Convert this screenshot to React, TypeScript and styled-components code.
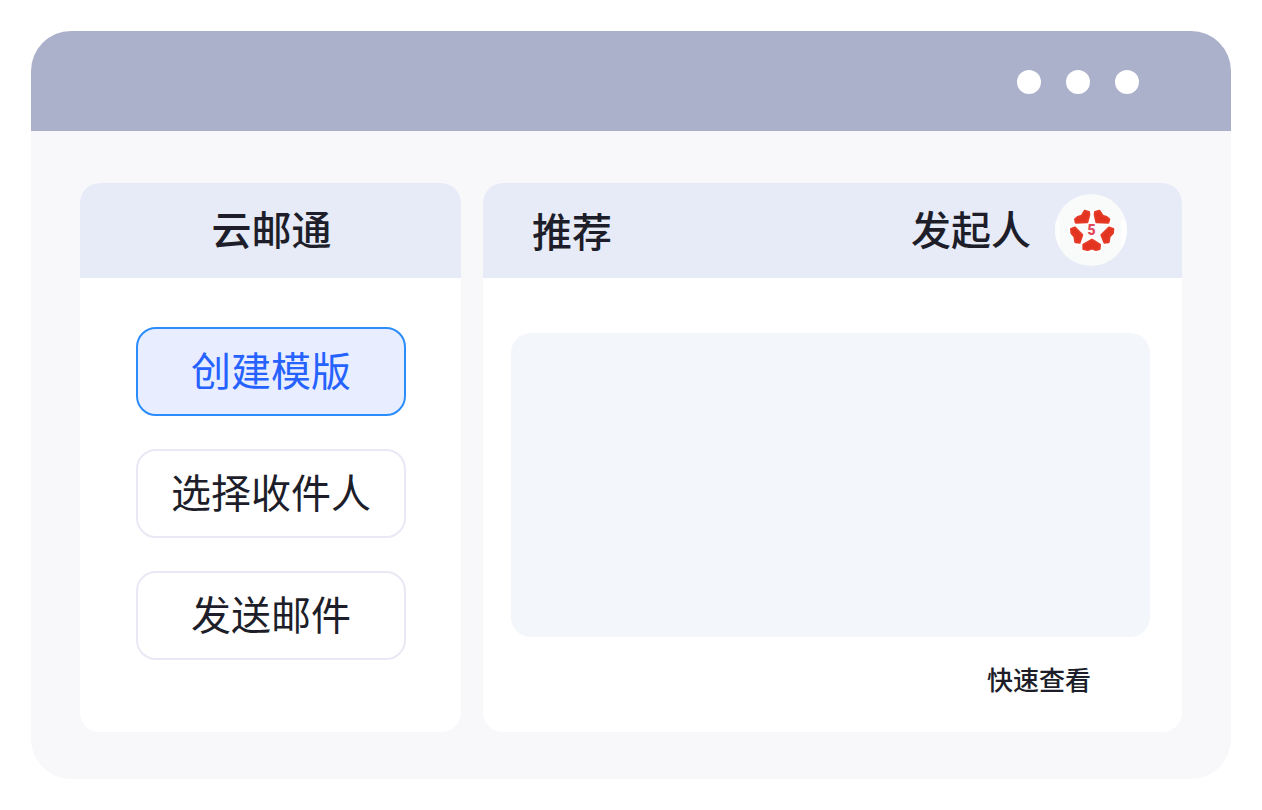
import React from "react";
import styled, { createGlobalStyle } from "styled-components";

const GlobalStyle = createGlobalStyle`
  * { box-sizing: border-box; }
  body {
    margin: 0;
    background: #ffffff;
    color: #1d1e2a;
    font-family: "Noto Sans CJK SC", sans-serif;
  }
`;

const Page = styled.div`
  padding: 31px;
`;

const Window = styled.div`
  border-radius: 40px;
  overflow: hidden;
  background: #f8f8fb;
`;

const TitleBar = styled.div`
  display: flex;
  align-items: center;
  justify-content: flex-end;
  gap: 25px;
  height: 100px;
  padding: 2px 92px 0 0;
  background: #acb1cb;
`;

const Dot = styled.span`
  width: 24px;
  height: 24px;
  border-radius: 50%;
  background: #ffffff;
`;

const Content = styled.main`
  display: flex;
  gap: 22px;
  padding: 52px 49px 47px;
`;

const Panel = styled.section<{ $grow: number }>`
  display: flex;
  flex-direction: column;
  flex: ${(p) => p.$grow} 1 0;
  min-width: 0;
  border-radius: 20px;
  overflow: hidden;
  background: #ffffff;
`;

const PanelHeader = styled.header<{ $split?: boolean }>`
  display: flex;
  align-items: center;
  justify-content: ${(p) => (p.$split ? "space-between" : "center")};
  height: 95px;
  padding: ${(p) => (p.$split ? "0 55px 2px 49px" : "0 0 6px 2px")};
  background: #e7ebf7;
`;

const Heading = styled.h2`
  margin: 0;
  font-size: 40px;
  line-height: 60px;
  font-weight: 500;
  white-space: nowrap;
`;

const Sender = styled.div`
  display: flex;
  align-items: center;
  gap: 24px;
`;

const SenderName = styled.span`
  padding-bottom: 4px;
  font-size: 40px;
  line-height: 60px;
  font-weight: 500;
  white-space: nowrap;
`;

const Avatar = styled.svg`
  display: block;
  width: 72px;
  height: 72px;
`;

const Steps = styled.div`
  display: flex;
  flex-direction: column;
  gap: 33px;
  padding: 49px 55px 72px 56px;
`;

const StepButton = styled.button<{ $active?: boolean }>`
  height: 89px;
  padding: 0 0 5px;
  border: 2px solid ${(p) => (p.$active ? "#2b8dfb" : "#e8e9f5")};
  border-radius: 20px;
  background: ${(p) => (p.$active ? "#e8eeff" : "#ffffff")};
  color: ${(p) => (p.$active ? "#2662ff" : "#1d1e2a")};
  font-family: inherit;
  font-size: 40px;
  line-height: 60px;
  font-weight: 400;
  white-space: nowrap;
  cursor: pointer;
`;

const PreviewArea = styled.div`
  display: flex;
  flex: 1;
  flex-direction: column;
  padding: 55px 32px 33px 28px;
`;

const Preview = styled.div`
  flex: 1;
  min-height: 304px;
  border-radius: 20px;
  background: #f3f6fb;
`;

const QuickView = styled.a`
  align-self: flex-end;
  margin: 22px 59px 0 0;
  color: inherit;
  font-size: 26px;
  line-height: 40px;
  font-weight: 500;
  text-decoration: none;
`;

const steps = ["创建模版", "选择收件人", "发送邮件"];

function SenderAvatar() {
  return (
    <Avatar viewBox="30 30 216 216" aria-hidden="true">
      <defs>
        <clipPath id="avatar-circle">
          <circle cx="138" cy="138" r="108" />
        </clipPath>
      </defs>
      <g clipPath="url(#avatar-circle)">
        <rect x="30" y="30" width="216" height="216" fill="#f9fafa" />
        <rect x="30" y="108" width="15" height="87" fill="#fdfdfd" />
        <rect x="228" y="108" width="18" height="87" fill="#ffffff" />
      </g>
      <g stroke="#ffffff" strokeWidth="16" strokeLinejoin="round" fill="#ffffff">
        <path d="M119 79L133 83L134 92L128 116L92 117L89 105L97 98L110 94Z" />
        <path d="M163 79L149 83L148 92L153 116L190 117L194 105L186 98L173 94Z" />
        <path d="M77 134L90 129L113 153L104 177L90 176L87 158L78 147Z" />
        <path d="M206 134L192 129L168 153L178 177L192 176L195 158L205 147Z" />
        <path d="M141 165L166 181L165 196L153 199L141 195L128 199L114 196L114 181Z" />
      </g>
      <g stroke="#e53c28" strokeWidth="6" strokeLinejoin="round" fill="#e23420">
        <path d="M119 80L132 84L133 92L127 115L92 116L90 106L98 99L110 95Z" />
        <path d="M163 80L150 84L149 92L154 115L190 116L193 106L185 99L173 95Z" />
        <path d="M78 135L90 130L112 153L104 176L91 175L88 158L79 147Z" />
        <path d="M205 135L192 130L169 153L178 176L191 175L194 158L204 147Z" />
        <path d="M141 167L165 182L164 195L153 198L141 194L128 198L115 195L115 182Z" />
      </g>
      <text
        x="140"
        y="154"
        textAnchor="middle"
        fontFamily="Roboto, sans-serif"
        fontSize="42"
        fontWeight="900"
        fill="#e2485a"
      >
        5
      </text>
    </Avatar>
  );
}

export default function App() {
  return (
    <>
      <GlobalStyle />
      <Page>
        <Window>
          <TitleBar>
            <Dot />
            <Dot />
            <Dot />
          </TitleBar>
          <Content>
            <Panel $grow={381}>
              <PanelHeader>
                <Heading>云邮通</Heading>
              </PanelHeader>
              <Steps>
                {steps.map((label, i) => (
                  <StepButton key={label} type="button" $active={i === 0}>
                    {label}
                  </StepButton>
                ))}
              </Steps>
            </Panel>
            <Panel $grow={699}>
              <PanelHeader $split>
                <Heading>推荐</Heading>
                <Sender>
                  <SenderName>发起人</SenderName>
                  <SenderAvatar />
                </Sender>
              </PanelHeader>
              <PreviewArea>
                <Preview />
                <QuickView href="#quick-view">快速查看</QuickView>
              </PreviewArea>
            </Panel>
          </Content>
        </Window>
      </Page>
    </>
  );
}
